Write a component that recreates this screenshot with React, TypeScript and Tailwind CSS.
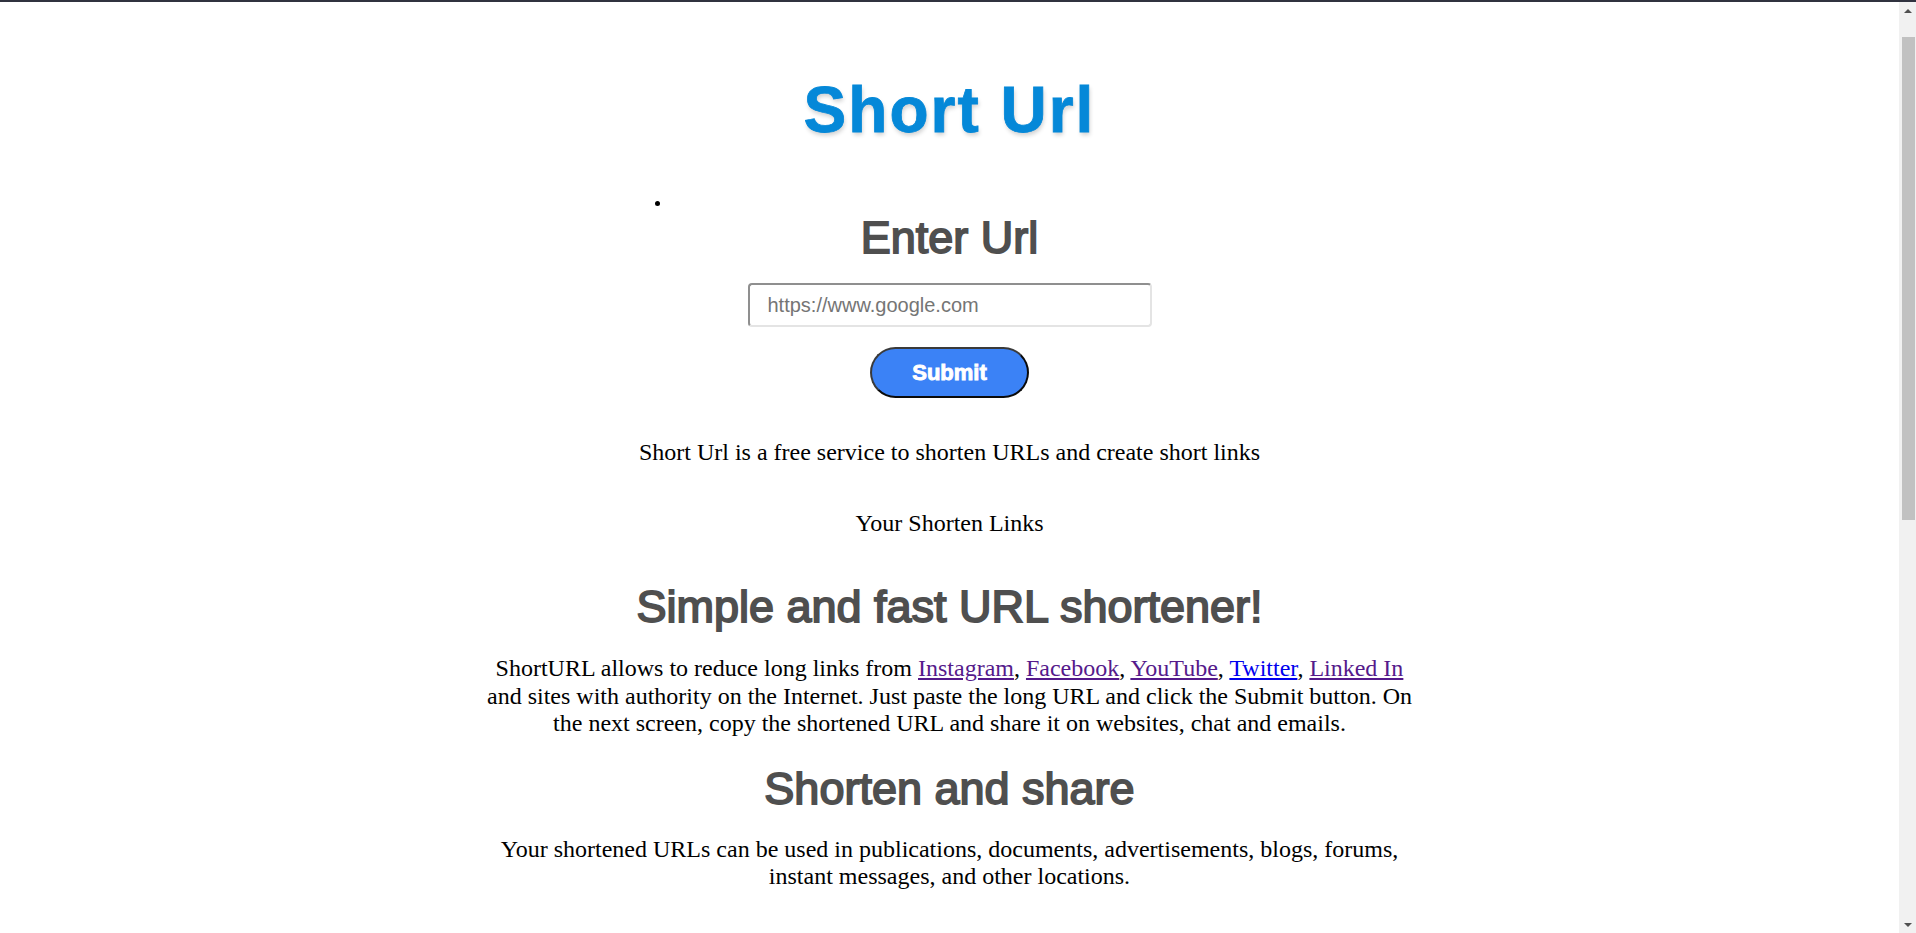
const sans = "font-['Liberation_Sans',Arial,sans-serif]";
const serif = "font-['Liberation_Serif','Times_New_Roman',serif]";

const socialLinks = [
  { label: "Instagram", visited: true },
  { label: "Facebook", visited: true },
  { label: "YouTube", visited: true },
  { label: "Twitter", visited: false },
  { label: "Linked In", visited: true },
];

function Scrollbar() {
  return (
    <div className="flex w-[17px] shrink-0 flex-col items-center bg-[#f1f1f1]">
      <div className="flex h-[17px] w-full items-center justify-center">
        <div className="h-0 w-0 border-x-[4px] border-b-[4px] border-x-transparent border-b-[#505050]" />
      </div>
      <div className="mt-[18px] h-[483px] w-[13px] ml-[2px] bg-[#c1c1c1]" />
      <div className="flex-1" />
      <div className="flex h-[17px] w-full items-center justify-center">
        <div className="h-0 w-0 border-x-[4px] border-t-[4px] border-x-transparent border-t-[#505050]" />
      </div>
    </div>
  );
}

export default function App() {
  return (
    <div className="flex h-[933px] flex-col overflow-hidden bg-white">
      <div className="h-[2px] shrink-0 bg-[#30323f]" />
      <div className="flex min-h-0 flex-1">
        <main className="flex flex-1 flex-col items-center">
          <h1
            className={`${sans} mt-[76px] text-[64px] font-bold leading-[64px] tracking-[2px] text-[#0588d8] [-webkit-text-stroke:0.8px_#0588d8] [text-shadow:1px_3px_4px_rgba(0,0,0,0.18)]`}
          >
            Short Url
          </h1>

          <div className="mt-[59px] w-[600px] pl-[5px]">
            <div className="h-[5px] w-[5px] rounded-full bg-black" />
          </div>

          <h2
            className={`${sans} mt-[9px] text-[45px] font-normal leading-[45px] text-[#4f4f4f] [-webkit-text-stroke:1.8px_#4f4f4f]`}
          >
            Enter Url
          </h2>

          <input
            type="text"
            placeholder="https://www.google.com"
            className={`${sans} mt-[23px] h-[44px] w-[404px] rounded-[4px] border-2 border-t-[#8f8f8f] border-l-[#8f8f8f] border-r-[#e4e4e4] border-b-[#e4e4e4] bg-white px-[18px] text-[20px] text-black outline-none placeholder:text-[#757575]`}
          />

          <button
            className={`${sans} mt-[20px] h-[51px] w-[159px] rounded-full border-2 border-t-[#3a3a3a] border-l-[#3a3a3a] border-r-[#0a0a0a] border-b-[#0a0a0a] bg-[#3b82f6] text-[22px] font-bold text-white [-webkit-text-stroke:0.9px_#ffffff]`}
          >
            Submit
          </button>

          <p className={`${serif} mt-[41px] text-[24px] leading-[27.5px] text-black`}>
            Short Url is a free service to shorten URLs and create short links
          </p>

          <p className={`${serif} mt-[43px] text-[24px] leading-[27.5px] text-black`}>
            Your Shorten Links
          </p>

          <h2
            className={`${sans} mt-[47px] text-[45px] font-normal leading-[45px] text-[#4f4f4f] [-webkit-text-stroke:1.8px_#4f4f4f]`}
          >
            Simple and fast URL shortener!
          </h2>

          <p className={`${serif} mt-[26px] w-[935px] text-center text-[24px] leading-[27.5px] text-black`}>
            ShortURL allows to reduce long links from{" "}
            {socialLinks.map((link, i) => (
              <span key={link.label}>
                <a
                  href="#"
                  className={`underline ${link.visited ? "text-[#551a8b]" : "text-[#0000ee]"}`}
                >
                  {link.label}
                </a>
                {i < socialLinks.length - 1 ? ", " : " "}
              </span>
            ))}
            and sites with authority on the Internet. Just paste the long URL and click the Submit
            button. On the next screen, copy the shortened URL and share it on websites, chat and
            emails.
          </p>

          <h2
            className={`${sans} mt-[28px] text-[45px] font-normal leading-[45px] text-[#4f4f4f] [-webkit-text-stroke:1.8px_#4f4f4f]`}
          >
            Shorten and share
          </h2>

          <p className={`${serif} mt-[25px] w-[935px] text-center text-[24px] leading-[27.5px] text-black`}>
            Your shortened URLs can be used in publications, documents, advertisements, blogs,
            forums, instant messages, and other locations.
          </p>
        </main>
        <Scrollbar />
      </div>
    </div>
  );
}
